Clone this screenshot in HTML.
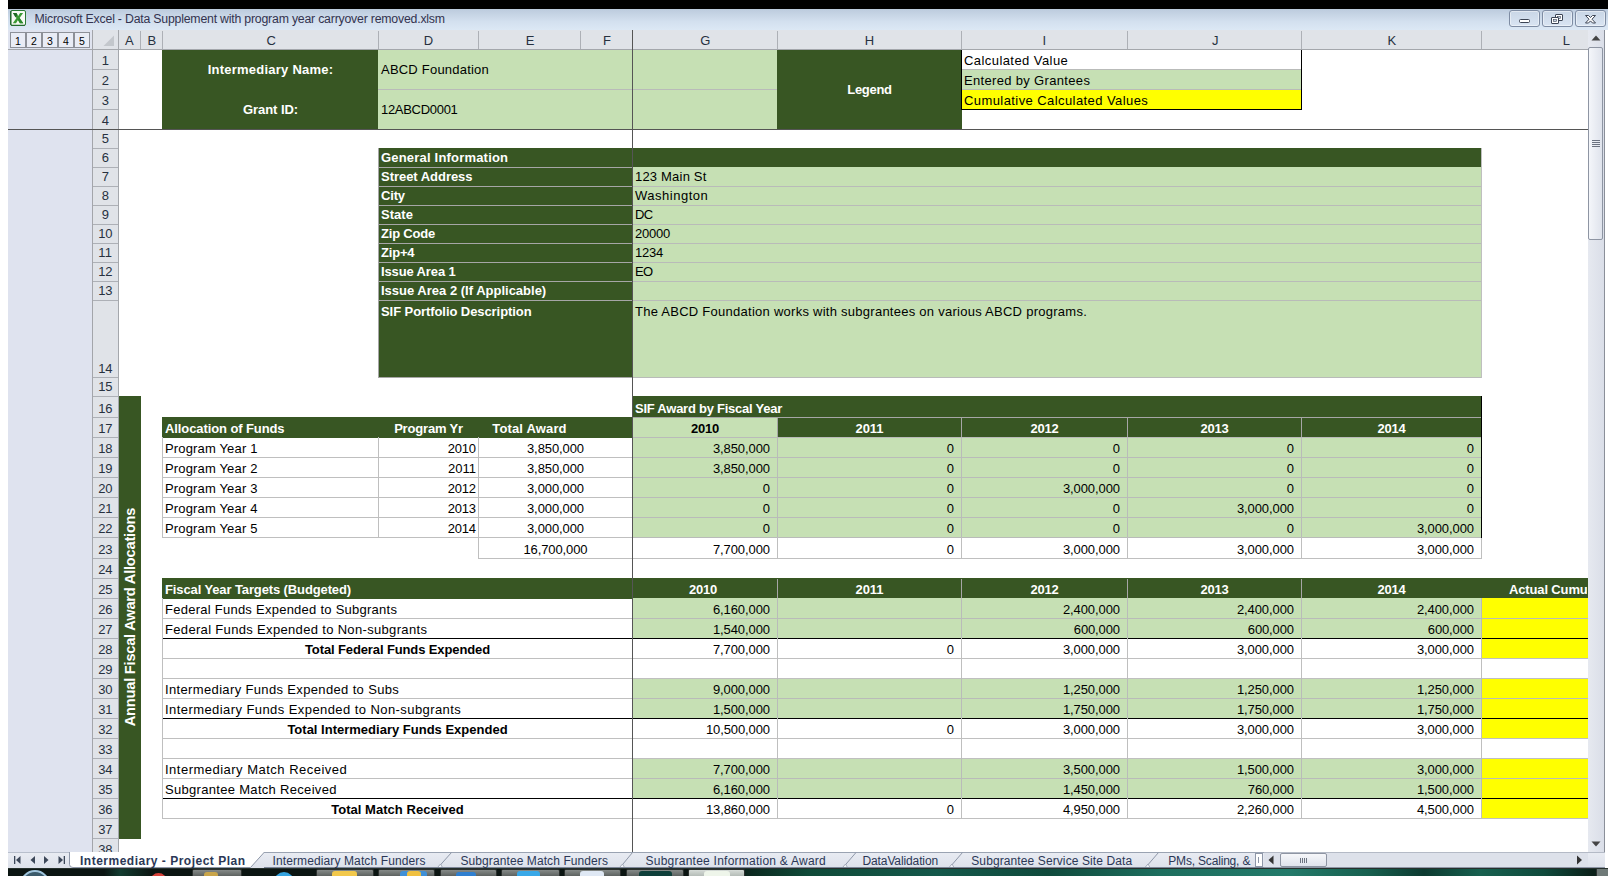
<!DOCTYPE html>
<html><head><meta charset="utf-8"><title>Microsoft Excel - Data Supplement</title>
<style>
html,body{margin:0;padding:0;}
body{width:1616px;height:876px;position:relative;overflow:hidden;background:#fff;font-family:"Liberation Sans",sans-serif;}
body>div,body>svg{position:absolute;}
.t{white-space:nowrap;overflow:visible;}
#blackbar{left:8px;top:0;width:1600px;height:9px;background:#000;}
#titlebar{left:8px;top:9px;width:1600px;height:21px;background:linear-gradient(#bccbdd,#d3e0ef 60%,#dce8f5);}
.wbtn{width:31px;height:17px;border:1px solid #7e8ca3;border-radius:3px;box-sizing:border-box;background:linear-gradient(#c9d6e6,#d9e4f2);box-shadow:inset 0 0 0 1px rgba(255,255,255,.45);}
.obtn{width:16px;height:16px;box-sizing:border-box;border:1px solid #8d9098;background:#e9ecf5;font-size:10.5px;line-height:16px;text-align:center;color:#000;text-indent:0;}
.vert span{position:absolute;left:50%;top:50%;transform:translate(-50%,-50%) rotate(-90deg);white-space:nowrap;color:#fff;font-weight:bold;}
.clip38{overflow:hidden!important;height:12px!important;}
#vscroll{left:1588px;top:30px;width:16px;height:838px;background:linear-gradient(90deg,#e6e9f0,#dadee8);border-right:1px solid #8a8f99;}
#vthumb{left:1588px;top:47px;width:15px;height:193px;box-sizing:border-box;border:1px solid #8e95a3;border-radius:2px;background:linear-gradient(90deg,#f4f6fa,#dfe3ec);}
#vthumb i{position:absolute;left:3px;width:8px;height:1px;background:#6c7380;}
#vthumb i:nth-child(1){top:92px}#vthumb i:nth-child(2){top:94px}#vthumb i:nth-child(3){top:96px}#vthumb i:nth-child(4){top:98px}
#tabbar{left:8px;top:852px;width:1597px;height:16px;background:linear-gradient(#e9ecf3,#dde1ea);}
#hscroll{left:1264px;top:852px;width:324px;height:16px;background:#dde1ea;}
#hthumb{left:1280px;top:853px;width:47px;height:14px;box-sizing:border-box;border:1px solid #8e95a3;border-radius:2px;background:linear-gradient(#f6f7fa,#dfe3ec);}
#hthumb i{position:absolute;top:4px;width:1px;height:5px;background:#6c7380;}
#hthumb i:nth-child(1){left:19px}#hthumb i:nth-child(2){left:21px}#hthumb i:nth-child(3){left:23px}#hthumb i:nth-child(4){left:25px}
#taskbar{left:8px;top:868px;width:1600px;height:8px;background:linear-gradient(90deg,#0b1512 0,#0b1512 6%,#123c30 7%,#0b1512 9%,#0b1512 45%,#0b2a20 46.5%,#0f4a38 50%,#14584a 58%,#0f4a3c 65%,#1d6e5e 72%,#237a6a 80%,#17604f 85%,#0c3a30 88.5%,#17604f 92%,#0f4a3c 96%,#0a2019 99%);border-top:1px solid #26302c;box-sizing:border-box;}
.tbtn.hi{background:linear-gradient(#d5dbd7,#b4bcb7);}
.tbtn{background:linear-gradient(#858a88,#5d6260);border:1px solid #2b302e;border-bottom:none;box-sizing:border-box;border-radius:2px 2px 0 0;}
</style></head><body>
<div id="blackbar"></div>
<div id="titlebar"></div>
<svg style="left:10px;top:10px" width="16" height="16" viewBox="0 0 16 16"><rect x="0.5" y="0.5" width="15" height="15" rx="1.5" fill="#f6faf4" stroke="#2a7a35"/><path d="M1 15V1" stroke="#1d5f2a" stroke-width="1"/><path d="M1 15.2H15" stroke="#1d5f2a" stroke-width="0.8"/><path d="M3 3h3.4l1.8 2.9L10.1 3h3L9.6 8l3.7 5.2H9.9L8 10.1l-2 3.1H2.8L6.5 8z" fill="#3a9a34"/><path d="M3 3h3.4l1 1.7-1.9 2.9z" fill="#1f6b25"/><path d="M8 10.1l1.9 3.1h3.4L9.6 8z" fill="#2b8a2c"/></svg>
<div class="t " style="left:34.4px;top:11px;width:600px;height:17px;line-height:17px;text-align:left;color:#33334f;font-size:12.3px;letter-spacing:-0.207px;padding-left:0px;box-sizing:border-box;">Microsoft Excel - Data Supplement with program year carryover removed.xlsm</div>
<div class="wbtn" style="left:1509px;top:10px"></div>
<div class="wbtn" style="left:1542px;top:10px"></div>
<div class="wbtn" style="left:1575px;top:10px"></div>
<svg style="left:1509px;top:10.5px" width="31" height="17" viewBox="0 0 31 17"><rect x="10.5" y="8.5" width="10" height="3" rx="1" fill="#fff" stroke="#3c4454"/></svg>
<svg style="left:1542px;top:10.5px" width="31" height="17" viewBox="0 0 31 17"><rect x="13.5" y="3.5" width="7" height="6" rx="0.5" fill="#fff" stroke="#3c4454"/><rect x="15.5" y="5.5" width="3" height="2" fill="#c9d6e6" stroke="#3c4454" stroke-width="0.6"/><rect x="9.5" y="6.5" width="7" height="6" rx="0.5" fill="#fff" stroke="#3c4454"/><rect x="11.5" y="8.5" width="3" height="2" fill="#c9d6e6" stroke="#3c4454" stroke-width="0.6"/></svg>
<svg style="left:1575px;top:10.5px" width="31" height="17" viewBox="0 0 31 17"><path d="M10.5 4.5h3l2 2 2-2h3l-3.5 3.7 3.5 3.8h-3l-2-2.1-2 2.1h-3l3.5-3.8z" fill="#fff" stroke="#3c4454" stroke-linejoin="round"/></svg>
<div style="left:8px;top:30px;width:85px;height:822px;background:#dfe3ef;"></div>
<div class="obtn" style="left:10px;top:32px">1</div>
<div class="obtn" style="left:26px;top:32px">2</div>
<div class="obtn" style="left:42px;top:32px">3</div>
<div class="obtn" style="left:58px;top:32px">4</div>
<div class="obtn" style="left:74px;top:32px">5</div>
<div style="left:8px;top:49px;width:85px;height:1px;background:#a3a5aa;"></div>
<div style="left:92px;top:30px;width:1px;height:822px;background:#a3a5aa;"></div>
<div style="left:93px;top:30px;width:1495px;height:20px;background:#e0e3e8;"></div>
<div style="left:93px;top:50px;width:26px;height:802px;background:#e0e3e8;"></div>
<svg style="left:103px;top:35px" width="12" height="12" viewBox="0 0 12 12"><path d="M11 0.5V11H0.5z" fill="#c3c7cc"/></svg>
<div style="left:140px;top:31px;width:1px;height:18px;background:#adb0b6;"></div>
<div class="t " style="left:119px;top:31px;width:21px;height:19px;line-height:19px;text-align:center;color:#27313f;font-size:13px;letter-spacing:0.094px;">A</div>
<div style="left:162px;top:31px;width:1px;height:18px;background:#adb0b6;"></div>
<div class="t " style="left:141px;top:31px;width:21px;height:19px;line-height:19px;text-align:center;color:#27313f;font-size:13px;letter-spacing:-0.431px;">B</div>
<div style="left:378px;top:31px;width:1px;height:18px;background:#adb0b6;"></div>
<div class="t " style="left:163px;top:31px;width:215px;height:19px;line-height:19px;text-align:center;color:#27313f;font-size:13px;letter-spacing:-1.309px;">C</div>
<div style="left:478px;top:31px;width:1px;height:18px;background:#adb0b6;"></div>
<div class="t " style="left:379px;top:31px;width:99px;height:19px;line-height:19px;text-align:center;color:#27313f;font-size:13px;letter-spacing:-0.066px;">D</div>
<div style="left:580px;top:31px;width:1px;height:18px;background:#adb0b6;"></div>
<div class="t " style="left:479px;top:31px;width:101px;height:19px;line-height:19px;text-align:center;color:#27313f;font-size:13px;letter-spacing:-1.274px;">E</div>
<div style="left:632px;top:31px;width:1px;height:18px;background:#adb0b6;"></div>
<div class="t " style="left:581px;top:31px;width:51px;height:19px;line-height:19px;text-align:center;color:#27313f;font-size:13px;letter-spacing:-0.978px;">F</div>
<div style="left:777px;top:31px;width:1px;height:18px;background:#adb0b6;"></div>
<div class="t " style="left:633px;top:31px;width:144px;height:19px;line-height:19px;text-align:center;color:#27313f;font-size:13px;letter-spacing:-0.553px;">G</div>
<div style="left:961px;top:31px;width:1px;height:18px;background:#adb0b6;"></div>
<div class="t " style="left:778px;top:31px;width:183px;height:19px;line-height:19px;text-align:center;color:#27313f;font-size:13px;letter-spacing:0.052px;">H</div>
<div style="left:1127px;top:31px;width:1px;height:18px;background:#adb0b6;"></div>
<div class="t " style="left:962px;top:31px;width:165px;height:19px;line-height:19px;text-align:center;color:#27313f;font-size:13px;letter-spacing:0.207px;">I</div>
<div style="left:1301px;top:31px;width:1px;height:18px;background:#adb0b6;"></div>
<div class="t " style="left:1128px;top:31px;width:173px;height:19px;line-height:19px;text-align:center;color:#27313f;font-size:13px;letter-spacing:-1.669px;">J</div>
<div style="left:1481px;top:31px;width:1px;height:18px;background:#adb0b6;"></div>
<div class="t " style="left:1302px;top:31px;width:179px;height:19px;line-height:19px;text-align:center;color:#27313f;font-size:13px;letter-spacing:-0.801px;">K</div>
<div class="t " style="left:1556px;top:31px;width:20px;height:19px;line-height:19px;text-align:center;color:#27313f;font-size:13px;letter-spacing:-0.859px;">L</div>
<div style="left:93px;top:69px;width:25px;height:1px;background:#adb0b6;"></div>
<div class="t " style="left:92.8px;top:51px;width:25px;height:19px;line-height:19px;text-align:center;color:#27313f;font-size:13px;letter-spacing:-0.229px;">1</div>
<div style="left:93px;top:89px;width:25px;height:1px;background:#adb0b6;"></div>
<div class="t " style="left:92.8px;top:71px;width:25px;height:19px;line-height:19px;text-align:center;color:#27313f;font-size:13px;letter-spacing:-0.229px;">2</div>
<div style="left:93px;top:109px;width:25px;height:1px;background:#adb0b6;"></div>
<div class="t " style="left:92.8px;top:91px;width:25px;height:19px;line-height:19px;text-align:center;color:#27313f;font-size:13px;letter-spacing:-0.229px;">3</div>
<div style="left:93px;top:129px;width:25px;height:1px;background:#adb0b6;"></div>
<div class="t " style="left:92.8px;top:111px;width:25px;height:19px;line-height:19px;text-align:center;color:#27313f;font-size:13px;letter-spacing:-0.229px;">4</div>
<div style="left:93px;top:148px;width:25px;height:1px;background:#adb0b6;"></div>
<div class="t " style="left:92.8px;top:129.4px;width:25px;height:19px;line-height:19px;text-align:center;color:#27313f;font-size:13px;letter-spacing:-0.229px;">5</div>
<div style="left:93px;top:167px;width:25px;height:1px;background:#adb0b6;"></div>
<div class="t " style="left:92.8px;top:148.4px;width:25px;height:19px;line-height:19px;text-align:center;color:#27313f;font-size:13px;letter-spacing:-0.229px;">6</div>
<div style="left:93px;top:186px;width:25px;height:1px;background:#adb0b6;"></div>
<div class="t " style="left:92.8px;top:167.4px;width:25px;height:19px;line-height:19px;text-align:center;color:#27313f;font-size:13px;letter-spacing:-0.229px;">7</div>
<div style="left:93px;top:205px;width:25px;height:1px;background:#adb0b6;"></div>
<div class="t " style="left:92.8px;top:186.4px;width:25px;height:19px;line-height:19px;text-align:center;color:#27313f;font-size:13px;letter-spacing:-0.229px;">8</div>
<div style="left:93px;top:224px;width:25px;height:1px;background:#adb0b6;"></div>
<div class="t " style="left:92.8px;top:205.4px;width:25px;height:19px;line-height:19px;text-align:center;color:#27313f;font-size:13px;letter-spacing:-0.229px;">9</div>
<div style="left:93px;top:243px;width:25px;height:1px;background:#adb0b6;"></div>
<div class="t " style="left:92.8px;top:224.4px;width:25px;height:19px;line-height:19px;text-align:center;color:#27313f;font-size:13px;letter-spacing:-0.229px;">10</div>
<div style="left:93px;top:262px;width:25px;height:1px;background:#adb0b6;"></div>
<div class="t " style="left:92.8px;top:243.4px;width:25px;height:19px;line-height:19px;text-align:center;color:#27313f;font-size:13px;letter-spacing:0.253px;">11</div>
<div style="left:93px;top:281px;width:25px;height:1px;background:#adb0b6;"></div>
<div class="t " style="left:92.8px;top:262.4px;width:25px;height:19px;line-height:19px;text-align:center;color:#27313f;font-size:13px;letter-spacing:-0.229px;">12</div>
<div style="left:93px;top:300px;width:25px;height:1px;background:#adb0b6;"></div>
<div class="t " style="left:92.8px;top:281.4px;width:25px;height:19px;line-height:19px;text-align:center;color:#27313f;font-size:13px;letter-spacing:-0.229px;">13</div>
<div style="left:93px;top:377px;width:25px;height:1px;background:#adb0b6;"></div>
<div class="t " style="left:92.8px;top:359px;width:25px;height:19px;line-height:19px;text-align:center;color:#27313f;font-size:13px;letter-spacing:-0.229px;">14</div>
<div style="left:93px;top:396px;width:25px;height:1px;background:#adb0b6;"></div>
<div class="t " style="left:92.8px;top:377.4px;width:25px;height:19px;line-height:19px;text-align:center;color:#27313f;font-size:13px;letter-spacing:-0.229px;">15</div>
<div style="left:93px;top:417px;width:25px;height:1px;background:#adb0b6;"></div>
<div class="t " style="left:92.8px;top:399px;width:25px;height:19px;line-height:19px;text-align:center;color:#27313f;font-size:13px;letter-spacing:-0.229px;">16</div>
<div style="left:93px;top:437px;width:25px;height:1px;background:#adb0b6;"></div>
<div class="t " style="left:92.8px;top:419px;width:25px;height:19px;line-height:19px;text-align:center;color:#27313f;font-size:13px;letter-spacing:-0.229px;">17</div>
<div style="left:93px;top:457px;width:25px;height:1px;background:#adb0b6;"></div>
<div class="t " style="left:92.8px;top:439px;width:25px;height:19px;line-height:19px;text-align:center;color:#27313f;font-size:13px;letter-spacing:-0.229px;">18</div>
<div style="left:93px;top:477px;width:25px;height:1px;background:#adb0b6;"></div>
<div class="t " style="left:92.8px;top:459px;width:25px;height:19px;line-height:19px;text-align:center;color:#27313f;font-size:13px;letter-spacing:-0.229px;">19</div>
<div style="left:93px;top:497px;width:25px;height:1px;background:#adb0b6;"></div>
<div class="t " style="left:92.8px;top:479px;width:25px;height:19px;line-height:19px;text-align:center;color:#27313f;font-size:13px;letter-spacing:-0.229px;">20</div>
<div style="left:93px;top:517px;width:25px;height:1px;background:#adb0b6;"></div>
<div class="t " style="left:92.8px;top:499px;width:25px;height:19px;line-height:19px;text-align:center;color:#27313f;font-size:13px;letter-spacing:-0.229px;">21</div>
<div style="left:93px;top:537px;width:25px;height:1px;background:#adb0b6;"></div>
<div class="t " style="left:92.8px;top:519px;width:25px;height:19px;line-height:19px;text-align:center;color:#27313f;font-size:13px;letter-spacing:-0.229px;">22</div>
<div style="left:93px;top:558px;width:25px;height:1px;background:#adb0b6;"></div>
<div class="t " style="left:92.8px;top:540px;width:25px;height:19px;line-height:19px;text-align:center;color:#27313f;font-size:13px;letter-spacing:-0.229px;">23</div>
<div style="left:93px;top:578px;width:25px;height:1px;background:#adb0b6;"></div>
<div class="t " style="left:92.8px;top:560px;width:25px;height:19px;line-height:19px;text-align:center;color:#27313f;font-size:13px;letter-spacing:-0.229px;">24</div>
<div style="left:93px;top:598px;width:25px;height:1px;background:#adb0b6;"></div>
<div class="t " style="left:92.8px;top:580px;width:25px;height:19px;line-height:19px;text-align:center;color:#27313f;font-size:13px;letter-spacing:-0.229px;">25</div>
<div style="left:93px;top:618px;width:25px;height:1px;background:#adb0b6;"></div>
<div class="t " style="left:92.8px;top:600px;width:25px;height:19px;line-height:19px;text-align:center;color:#27313f;font-size:13px;letter-spacing:-0.229px;">26</div>
<div style="left:93px;top:638px;width:25px;height:1px;background:#adb0b6;"></div>
<div class="t " style="left:92.8px;top:620px;width:25px;height:19px;line-height:19px;text-align:center;color:#27313f;font-size:13px;letter-spacing:-0.229px;">27</div>
<div style="left:93px;top:658px;width:25px;height:1px;background:#adb0b6;"></div>
<div class="t " style="left:92.8px;top:640px;width:25px;height:19px;line-height:19px;text-align:center;color:#27313f;font-size:13px;letter-spacing:-0.229px;">28</div>
<div style="left:93px;top:678px;width:25px;height:1px;background:#adb0b6;"></div>
<div class="t " style="left:92.8px;top:660px;width:25px;height:19px;line-height:19px;text-align:center;color:#27313f;font-size:13px;letter-spacing:-0.229px;">29</div>
<div style="left:93px;top:698px;width:25px;height:1px;background:#adb0b6;"></div>
<div class="t " style="left:92.8px;top:680px;width:25px;height:19px;line-height:19px;text-align:center;color:#27313f;font-size:13px;letter-spacing:-0.229px;">30</div>
<div style="left:93px;top:718px;width:25px;height:1px;background:#adb0b6;"></div>
<div class="t " style="left:92.8px;top:700px;width:25px;height:19px;line-height:19px;text-align:center;color:#27313f;font-size:13px;letter-spacing:-0.229px;">31</div>
<div style="left:93px;top:738px;width:25px;height:1px;background:#adb0b6;"></div>
<div class="t " style="left:92.8px;top:720px;width:25px;height:19px;line-height:19px;text-align:center;color:#27313f;font-size:13px;letter-spacing:-0.229px;">32</div>
<div style="left:93px;top:758px;width:25px;height:1px;background:#adb0b6;"></div>
<div class="t " style="left:92.8px;top:740px;width:25px;height:19px;line-height:19px;text-align:center;color:#27313f;font-size:13px;letter-spacing:-0.229px;">33</div>
<div style="left:93px;top:778px;width:25px;height:1px;background:#adb0b6;"></div>
<div class="t " style="left:92.8px;top:760px;width:25px;height:19px;line-height:19px;text-align:center;color:#27313f;font-size:13px;letter-spacing:-0.229px;">34</div>
<div style="left:93px;top:798px;width:25px;height:1px;background:#adb0b6;"></div>
<div class="t " style="left:92.8px;top:780px;width:25px;height:19px;line-height:19px;text-align:center;color:#27313f;font-size:13px;letter-spacing:-0.229px;">35</div>
<div style="left:93px;top:818px;width:25px;height:1px;background:#adb0b6;"></div>
<div class="t " style="left:92.8px;top:800px;width:25px;height:19px;line-height:19px;text-align:center;color:#27313f;font-size:13px;letter-spacing:-0.229px;">36</div>
<div style="left:93px;top:838px;width:25px;height:1px;background:#adb0b6;"></div>
<div class="t " style="left:92.8px;top:820px;width:25px;height:19px;line-height:19px;text-align:center;color:#27313f;font-size:13px;letter-spacing:-0.229px;">37</div>
<div class="t clip38" style="left:92.8px;top:840px;width:25px;height:19px;line-height:19px;text-align:center;color:#27313f;font-size:13px;letter-spacing:-0.229px;">38</div>
<div style="left:162px;top:49px;width:217px;height:81px;background:#385623;"></div>
<div style="left:378px;top:49px;width:400px;height:81px;background:#c6e0b4;"></div>
<div style="left:777px;top:49px;width:185px;height:81px;background:#385623;"></div>
<div style="left:961px;top:50px;width:340px;height:20px;background:#fff;"></div>
<div style="left:961px;top:70px;width:340px;height:20px;background:#c6e0b4;"></div>
<div style="left:961px;top:90px;width:340px;height:19px;background:#ffff00;"></div>
<div style="left:961px;top:69px;width:341px;height:1px;background:#b9bbb9;"></div>
<div style="left:961px;top:89px;width:341px;height:1px;background:#b9bbb9;"></div>
<div style="left:961px;top:109px;width:341px;height:1px;background:#000;"></div>
<div style="left:1301px;top:50px;width:1px;height:60px;background:#000;"></div>
<div style="left:961px;top:50px;width:1px;height:60px;background:#000;"></div>
<div style="left:378px;top:89px;width:399px;height:1px;background:#b9bbb9;"></div>
<div class="t " style="left:163px;top:60.0px;width:215px;height:19px;line-height:19px;text-align:center;color:#fff;font-size:13.0px;letter-spacing:0.240px;font-weight:bold;">Intermediary Name:</div>
<div class="t " style="left:163px;top:100.0px;width:215px;height:19px;line-height:19px;text-align:center;color:#fff;font-size:13.0px;letter-spacing:-0.046px;font-weight:bold;">Grant ID:</div>
<div class="t " style="left:379px;top:60.0px;width:253px;height:19px;line-height:19px;text-align:left;color:#000;font-size:13.0px;letter-spacing:0.215px;padding-left:2px;box-sizing:border-box;">ABCD Foundation</div>
<div class="t " style="left:379px;top:100.0px;width:253px;height:19px;line-height:19px;text-align:left;color:#000;font-size:13.0px;letter-spacing:-0.300px;padding-left:2px;box-sizing:border-box;">12ABCD0001</div>
<div class="t " style="left:778px;top:80.0px;width:183px;height:19px;line-height:19px;text-align:center;color:#fff;font-size:13.0px;letter-spacing:-0.288px;font-weight:bold;">Legend</div>
<div class="t " style="left:962px;top:51px;width:339px;height:19px;line-height:19px;text-align:left;color:#000;font-size:13.0px;letter-spacing:0.430px;padding-left:2px;box-sizing:border-box;">Calculated Value</div>
<div class="t " style="left:962px;top:71px;width:339px;height:19px;line-height:19px;text-align:left;color:#000;font-size:13.0px;letter-spacing:0.329px;padding-left:2px;box-sizing:border-box;">Entered by Grantees</div>
<div class="t " style="left:962px;top:91px;width:339px;height:19px;line-height:19px;text-align:left;color:#000;font-size:13.0px;letter-spacing:0.420px;padding-left:2px;box-sizing:border-box;">Cumulative Calculated Values</div>
<div style="left:378px;top:148px;width:1104px;height:20px;background:#385623;"></div>
<div style="left:378px;top:167px;width:255px;height:211px;background:#385623;"></div>
<div style="left:632px;top:167px;width:850px;height:211px;background:#c6e0b4;"></div>
<div style="left:378px;top:167px;width:255px;height:1px;background:#a6a6a6;"></div>
<div class="t " style="left:379px;top:148px;width:253px;height:19px;line-height:19px;text-align:left;color:#fff;font-size:13.0px;letter-spacing:0.194px;font-weight:bold;padding-left:2px;box-sizing:border-box;">General Information</div>
<div style="left:378px;top:186px;width:255px;height:1px;background:#a6a6a6;"></div>
<div style="left:633px;top:186px;width:849px;height:1px;background:#b9bbb9;"></div>
<div class="t " style="left:379px;top:167px;width:253px;height:19px;line-height:19px;text-align:left;color:#fff;font-size:13.0px;letter-spacing:-0.035px;font-weight:bold;padding-left:2px;box-sizing:border-box;">Street Address</div>
<div class="t " style="left:633px;top:167px;width:848px;height:19px;line-height:19px;text-align:left;color:#000;font-size:13.0px;letter-spacing:0.197px;padding-left:2px;box-sizing:border-box;">123 Main St</div>
<div style="left:378px;top:205px;width:255px;height:1px;background:#a6a6a6;"></div>
<div style="left:633px;top:205px;width:849px;height:1px;background:#b9bbb9;"></div>
<div class="t " style="left:379px;top:186px;width:253px;height:19px;line-height:19px;text-align:left;color:#fff;font-size:13.0px;letter-spacing:-0.157px;font-weight:bold;padding-left:2px;box-sizing:border-box;">City</div>
<div class="t " style="left:633px;top:186px;width:848px;height:19px;line-height:19px;text-align:left;color:#000;font-size:13.0px;letter-spacing:0.515px;padding-left:2px;box-sizing:border-box;">Washington</div>
<div style="left:378px;top:224px;width:255px;height:1px;background:#a6a6a6;"></div>
<div style="left:633px;top:224px;width:849px;height:1px;background:#b9bbb9;"></div>
<div class="t " style="left:379px;top:205px;width:253px;height:19px;line-height:19px;text-align:left;color:#fff;font-size:13.0px;letter-spacing:0.039px;font-weight:bold;padding-left:2px;box-sizing:border-box;">State</div>
<div class="t " style="left:633px;top:205px;width:848px;height:19px;line-height:19px;text-align:left;color:#000;font-size:13.0px;letter-spacing:-0.688px;padding-left:2px;box-sizing:border-box;">DC</div>
<div style="left:378px;top:243px;width:255px;height:1px;background:#a6a6a6;"></div>
<div style="left:633px;top:243px;width:849px;height:1px;background:#b9bbb9;"></div>
<div class="t " style="left:379px;top:224px;width:253px;height:19px;line-height:19px;text-align:left;color:#fff;font-size:13.0px;letter-spacing:-0.213px;font-weight:bold;padding-left:2px;box-sizing:border-box;">Zip Code</div>
<div class="t " style="left:633px;top:224px;width:848px;height:19px;line-height:19px;text-align:left;color:#000;font-size:13.0px;letter-spacing:-0.229px;padding-left:2px;box-sizing:border-box;">20000</div>
<div style="left:378px;top:262px;width:255px;height:1px;background:#a6a6a6;"></div>
<div style="left:633px;top:262px;width:849px;height:1px;background:#b9bbb9;"></div>
<div class="t " style="left:379px;top:243px;width:253px;height:19px;line-height:19px;text-align:left;color:#fff;font-size:13.0px;letter-spacing:-0.188px;font-weight:bold;padding-left:2px;box-sizing:border-box;">Zip+4</div>
<div class="t " style="left:633px;top:243px;width:848px;height:19px;line-height:19px;text-align:left;color:#000;font-size:13.0px;letter-spacing:-0.229px;padding-left:2px;box-sizing:border-box;">1234</div>
<div style="left:378px;top:281px;width:255px;height:1px;background:#a6a6a6;"></div>
<div style="left:633px;top:281px;width:849px;height:1px;background:#b9bbb9;"></div>
<div class="t " style="left:379px;top:262px;width:253px;height:19px;line-height:19px;text-align:left;color:#fff;font-size:13.0px;letter-spacing:-0.130px;font-weight:bold;padding-left:2px;box-sizing:border-box;">Issue Area 1</div>
<div class="t " style="left:633px;top:262px;width:848px;height:19px;line-height:19px;text-align:left;color:#000;font-size:13.0px;letter-spacing:-0.795px;padding-left:2px;box-sizing:border-box;">EO</div>
<div style="left:378px;top:300px;width:255px;height:1px;background:#a6a6a6;"></div>
<div style="left:633px;top:300px;width:849px;height:1px;background:#b9bbb9;"></div>
<div class="t " style="left:379px;top:281px;width:253px;height:19px;line-height:19px;text-align:left;color:#fff;font-size:13.0px;letter-spacing:0.000px;font-weight:bold;padding-left:2px;box-sizing:border-box;">Issue Area 2 (If Applicable)</div>
<div class="t " style="left:379px;top:302px;width:253px;height:19px;line-height:19px;text-align:left;color:#fff;font-size:13.0px;letter-spacing:-0.075px;font-weight:bold;padding-left:2px;box-sizing:border-box;">SIF Portfolio Description</div>
<div class="t " style="left:633px;top:302px;width:848px;height:19px;line-height:19px;text-align:left;color:#000;font-size:13.0px;letter-spacing:0.261px;padding-left:2px;box-sizing:border-box;">The ABCD Foundation works with subgrantees on various ABCD programs.</div>
<div style="left:633px;top:377px;width:849px;height:1px;background:#b9bbb9;"></div>
<div style="left:378px;top:148px;width:1px;height:230px;background:#a6a6a6;"></div>
<div style="left:378px;top:377px;width:255px;height:1px;background:#a6a6a6;"></div>
<div style="left:1481px;top:148px;width:1px;height:230px;background:#bfbfbf;"></div>
<div style="left:119px;top:396px;width:22px;height:443px;background:#385623;"></div>
<div class="t vert" style="left:119px;top:507.5px;width:22px;height:218.5px;"><span style="font-size:14.6px;letter-spacing:-0.209px;margin-left:-0.105px">Annual Fiscal Award Allocations</span></div>
<div style="left:632px;top:396px;width:850px;height:22px;background:#385623;"></div>
<div class="t " style="left:633px;top:399px;width:848px;height:19px;line-height:19px;text-align:left;color:#fff;font-size:13.0px;letter-spacing:-0.247px;font-weight:bold;padding-left:2px;box-sizing:border-box;">SIF Award by Fiscal Year</div>
<div style="left:162px;top:417px;width:471px;height:21px;background:#385623;"></div>
<div style="left:632px;top:417px;width:146px;height:21px;background:#c6e0b4;"></div>
<div style="left:777px;top:417px;width:705px;height:21px;background:#385623;"></div>
<div class="t " style="left:163px;top:419px;width:215px;height:19px;line-height:19px;text-align:left;color:#fff;font-size:13.0px;letter-spacing:-0.096px;font-weight:bold;padding-left:2px;box-sizing:border-box;">Allocation of Funds</div>
<div class="t " style="left:379px;top:419px;width:99px;height:19px;line-height:19px;text-align:center;color:#fff;font-size:13.0px;letter-spacing:-0.187px;font-weight:bold;">Program Yr</div>
<div class="t " style="left:479px;top:419px;width:101px;height:19px;line-height:19px;text-align:center;color:#fff;font-size:13.0px;letter-spacing:0.157px;font-weight:bold;">Total Award</div>
<div class="t " style="left:633px;top:419px;width:144px;height:19px;line-height:19px;text-align:center;color:#000;font-size:13.0px;letter-spacing:-0.229px;font-weight:bold;">2010</div>
<div class="t " style="left:778px;top:419px;width:183px;height:19px;line-height:19px;text-align:center;color:#fff;font-size:13.0px;letter-spacing:-0.050px;font-weight:bold;">2011</div>
<div style="left:777px;top:418px;width:1px;height:20px;background:#a6a6a6;"></div>
<div class="t " style="left:962px;top:419px;width:165px;height:19px;line-height:19px;text-align:center;color:#fff;font-size:13.0px;letter-spacing:-0.229px;font-weight:bold;">2012</div>
<div style="left:961px;top:418px;width:1px;height:20px;background:#a6a6a6;"></div>
<div class="t " style="left:1128px;top:419px;width:173px;height:19px;line-height:19px;text-align:center;color:#fff;font-size:13.0px;letter-spacing:-0.229px;font-weight:bold;">2013</div>
<div style="left:1127px;top:418px;width:1px;height:20px;background:#a6a6a6;"></div>
<div class="t " style="left:1302px;top:419px;width:179px;height:19px;line-height:19px;text-align:center;color:#fff;font-size:13.0px;letter-spacing:-0.229px;font-weight:bold;">2014</div>
<div style="left:1301px;top:418px;width:1px;height:20px;background:#a6a6a6;"></div>
<div style="left:632px;top:417px;width:850px;height:1px;background:#a6a6a6;"></div>
<div style="left:632px;top:437px;width:850px;height:101px;background:#c6e0b4;"></div>
<div class="t " style="left:163px;top:439px;width:215px;height:19px;line-height:19px;text-align:left;color:#000;font-size:13.0px;letter-spacing:0.158px;padding-left:2px;box-sizing:border-box;">Program Year 1</div>
<div class="t " style="left:379px;top:439px;width:99px;height:19px;line-height:19px;text-align:right;color:#000;font-size:13.0px;letter-spacing:-0.229px;padding-right:2px;box-sizing:border-box;margin-left:-0.229px;">2010</div>
<div class="t " style="left:479px;top:439px;width:153px;height:19px;line-height:19px;text-align:center;color:#000;font-size:13.0px;letter-spacing:-0.092px;">3,850,000</div>
<div class="t " style="left:633px;top:439px;width:144px;height:19px;line-height:19px;text-align:right;color:#000;font-size:13.0px;letter-spacing:-0.092px;padding-right:7px;box-sizing:border-box;margin-left:-0.092px;">3,850,000</div>
<div class="t " style="left:778px;top:439px;width:183px;height:19px;line-height:19px;text-align:right;color:#000;font-size:13.0px;letter-spacing:-0.229px;padding-right:7px;box-sizing:border-box;margin-left:-0.229px;">0</div>
<div class="t " style="left:962px;top:439px;width:165px;height:19px;line-height:19px;text-align:right;color:#000;font-size:13.0px;letter-spacing:-0.229px;padding-right:7px;box-sizing:border-box;margin-left:-0.229px;">0</div>
<div class="t " style="left:1128px;top:439px;width:173px;height:19px;line-height:19px;text-align:right;color:#000;font-size:13.0px;letter-spacing:-0.229px;padding-right:7px;box-sizing:border-box;margin-left:-0.229px;">0</div>
<div class="t " style="left:1302px;top:439px;width:179px;height:19px;line-height:19px;text-align:right;color:#000;font-size:13.0px;letter-spacing:-0.229px;padding-right:7px;box-sizing:border-box;margin-left:-0.229px;">0</div>
<div style="left:162px;top:457px;width:471px;height:1px;background:#bfbfbf;"></div>
<div style="left:633px;top:457px;width:849px;height:1px;background:#b9bbb9;"></div>
<div class="t " style="left:163px;top:459px;width:215px;height:19px;line-height:19px;text-align:left;color:#000;font-size:13.0px;letter-spacing:0.158px;padding-left:2px;box-sizing:border-box;">Program Year 2</div>
<div class="t " style="left:379px;top:459px;width:99px;height:19px;line-height:19px;text-align:right;color:#000;font-size:13.0px;letter-spacing:0.012px;padding-right:2px;box-sizing:border-box;margin-left:0.012px;">2011</div>
<div class="t " style="left:479px;top:459px;width:153px;height:19px;line-height:19px;text-align:center;color:#000;font-size:13.0px;letter-spacing:-0.092px;">3,850,000</div>
<div class="t " style="left:633px;top:459px;width:144px;height:19px;line-height:19px;text-align:right;color:#000;font-size:13.0px;letter-spacing:-0.092px;padding-right:7px;box-sizing:border-box;margin-left:-0.092px;">3,850,000</div>
<div class="t " style="left:778px;top:459px;width:183px;height:19px;line-height:19px;text-align:right;color:#000;font-size:13.0px;letter-spacing:-0.229px;padding-right:7px;box-sizing:border-box;margin-left:-0.229px;">0</div>
<div class="t " style="left:962px;top:459px;width:165px;height:19px;line-height:19px;text-align:right;color:#000;font-size:13.0px;letter-spacing:-0.229px;padding-right:7px;box-sizing:border-box;margin-left:-0.229px;">0</div>
<div class="t " style="left:1128px;top:459px;width:173px;height:19px;line-height:19px;text-align:right;color:#000;font-size:13.0px;letter-spacing:-0.229px;padding-right:7px;box-sizing:border-box;margin-left:-0.229px;">0</div>
<div class="t " style="left:1302px;top:459px;width:179px;height:19px;line-height:19px;text-align:right;color:#000;font-size:13.0px;letter-spacing:-0.229px;padding-right:7px;box-sizing:border-box;margin-left:-0.229px;">0</div>
<div style="left:162px;top:477px;width:471px;height:1px;background:#bfbfbf;"></div>
<div style="left:633px;top:477px;width:849px;height:1px;background:#b9bbb9;"></div>
<div class="t " style="left:163px;top:479px;width:215px;height:19px;line-height:19px;text-align:left;color:#000;font-size:13.0px;letter-spacing:0.158px;padding-left:2px;box-sizing:border-box;">Program Year 3</div>
<div class="t " style="left:379px;top:479px;width:99px;height:19px;line-height:19px;text-align:right;color:#000;font-size:13.0px;letter-spacing:-0.229px;padding-right:2px;box-sizing:border-box;margin-left:-0.229px;">2012</div>
<div class="t " style="left:479px;top:479px;width:153px;height:19px;line-height:19px;text-align:center;color:#000;font-size:13.0px;letter-spacing:-0.092px;">3,000,000</div>
<div class="t " style="left:633px;top:479px;width:144px;height:19px;line-height:19px;text-align:right;color:#000;font-size:13.0px;letter-spacing:-0.229px;padding-right:7px;box-sizing:border-box;margin-left:-0.229px;">0</div>
<div class="t " style="left:778px;top:479px;width:183px;height:19px;line-height:19px;text-align:right;color:#000;font-size:13.0px;letter-spacing:-0.229px;padding-right:7px;box-sizing:border-box;margin-left:-0.229px;">0</div>
<div class="t " style="left:962px;top:479px;width:165px;height:19px;line-height:19px;text-align:right;color:#000;font-size:13.0px;letter-spacing:-0.092px;padding-right:7px;box-sizing:border-box;margin-left:-0.092px;">3,000,000</div>
<div class="t " style="left:1128px;top:479px;width:173px;height:19px;line-height:19px;text-align:right;color:#000;font-size:13.0px;letter-spacing:-0.229px;padding-right:7px;box-sizing:border-box;margin-left:-0.229px;">0</div>
<div class="t " style="left:1302px;top:479px;width:179px;height:19px;line-height:19px;text-align:right;color:#000;font-size:13.0px;letter-spacing:-0.229px;padding-right:7px;box-sizing:border-box;margin-left:-0.229px;">0</div>
<div style="left:162px;top:497px;width:471px;height:1px;background:#bfbfbf;"></div>
<div style="left:633px;top:497px;width:849px;height:1px;background:#b9bbb9;"></div>
<div class="t " style="left:163px;top:499px;width:215px;height:19px;line-height:19px;text-align:left;color:#000;font-size:13.0px;letter-spacing:0.158px;padding-left:2px;box-sizing:border-box;">Program Year 4</div>
<div class="t " style="left:379px;top:499px;width:99px;height:19px;line-height:19px;text-align:right;color:#000;font-size:13.0px;letter-spacing:-0.229px;padding-right:2px;box-sizing:border-box;margin-left:-0.229px;">2013</div>
<div class="t " style="left:479px;top:499px;width:153px;height:19px;line-height:19px;text-align:center;color:#000;font-size:13.0px;letter-spacing:-0.092px;">3,000,000</div>
<div class="t " style="left:633px;top:499px;width:144px;height:19px;line-height:19px;text-align:right;color:#000;font-size:13.0px;letter-spacing:-0.229px;padding-right:7px;box-sizing:border-box;margin-left:-0.229px;">0</div>
<div class="t " style="left:778px;top:499px;width:183px;height:19px;line-height:19px;text-align:right;color:#000;font-size:13.0px;letter-spacing:-0.229px;padding-right:7px;box-sizing:border-box;margin-left:-0.229px;">0</div>
<div class="t " style="left:962px;top:499px;width:165px;height:19px;line-height:19px;text-align:right;color:#000;font-size:13.0px;letter-spacing:-0.229px;padding-right:7px;box-sizing:border-box;margin-left:-0.229px;">0</div>
<div class="t " style="left:1128px;top:499px;width:173px;height:19px;line-height:19px;text-align:right;color:#000;font-size:13.0px;letter-spacing:-0.092px;padding-right:7px;box-sizing:border-box;margin-left:-0.092px;">3,000,000</div>
<div class="t " style="left:1302px;top:499px;width:179px;height:19px;line-height:19px;text-align:right;color:#000;font-size:13.0px;letter-spacing:-0.229px;padding-right:7px;box-sizing:border-box;margin-left:-0.229px;">0</div>
<div style="left:162px;top:517px;width:471px;height:1px;background:#bfbfbf;"></div>
<div style="left:633px;top:517px;width:849px;height:1px;background:#b9bbb9;"></div>
<div class="t " style="left:163px;top:519px;width:215px;height:19px;line-height:19px;text-align:left;color:#000;font-size:13.0px;letter-spacing:0.158px;padding-left:2px;box-sizing:border-box;">Program Year 5</div>
<div class="t " style="left:379px;top:519px;width:99px;height:19px;line-height:19px;text-align:right;color:#000;font-size:13.0px;letter-spacing:-0.229px;padding-right:2px;box-sizing:border-box;margin-left:-0.229px;">2014</div>
<div class="t " style="left:479px;top:519px;width:153px;height:19px;line-height:19px;text-align:center;color:#000;font-size:13.0px;letter-spacing:-0.092px;">3,000,000</div>
<div class="t " style="left:633px;top:519px;width:144px;height:19px;line-height:19px;text-align:right;color:#000;font-size:13.0px;letter-spacing:-0.229px;padding-right:7px;box-sizing:border-box;margin-left:-0.229px;">0</div>
<div class="t " style="left:778px;top:519px;width:183px;height:19px;line-height:19px;text-align:right;color:#000;font-size:13.0px;letter-spacing:-0.229px;padding-right:7px;box-sizing:border-box;margin-left:-0.229px;">0</div>
<div class="t " style="left:962px;top:519px;width:165px;height:19px;line-height:19px;text-align:right;color:#000;font-size:13.0px;letter-spacing:-0.229px;padding-right:7px;box-sizing:border-box;margin-left:-0.229px;">0</div>
<div class="t " style="left:1128px;top:519px;width:173px;height:19px;line-height:19px;text-align:right;color:#000;font-size:13.0px;letter-spacing:-0.229px;padding-right:7px;box-sizing:border-box;margin-left:-0.229px;">0</div>
<div class="t " style="left:1302px;top:519px;width:179px;height:19px;line-height:19px;text-align:right;color:#000;font-size:13.0px;letter-spacing:-0.092px;padding-right:7px;box-sizing:border-box;margin-left:-0.092px;">3,000,000</div>
<div style="left:162px;top:537px;width:471px;height:1px;background:#bfbfbf;"></div>
<div style="left:633px;top:537px;width:849px;height:1px;background:#b9bbb9;"></div>
<div style="left:162px;top:437px;width:1px;height:101px;background:#bfbfbf;"></div>
<div style="left:378px;top:437px;width:1px;height:101px;background:#bfbfbf;"></div>
<div style="left:478px;top:437px;width:1px;height:101px;background:#bfbfbf;"></div>
<div style="left:777px;top:437px;width:1px;height:101px;background:#b9bbb9;"></div>
<div style="left:961px;top:437px;width:1px;height:101px;background:#b9bbb9;"></div>
<div style="left:1127px;top:437px;width:1px;height:101px;background:#b9bbb9;"></div>
<div style="left:1301px;top:437px;width:1px;height:101px;background:#b9bbb9;"></div>
<div style="left:632px;top:437px;width:850px;height:1px;background:#b9bbb9;"></div>
<div class="t " style="left:479px;top:540px;width:153px;height:19px;line-height:19px;text-align:center;color:#000;font-size:13.0px;letter-spacing:-0.106px;">16,700,000</div>
<div class="t " style="left:633px;top:540px;width:144px;height:19px;line-height:19px;text-align:right;color:#000;font-size:13.0px;letter-spacing:-0.092px;padding-right:7px;box-sizing:border-box;margin-left:-0.092px;">7,700,000</div>
<div class="t " style="left:778px;top:540px;width:183px;height:19px;line-height:19px;text-align:right;color:#000;font-size:13.0px;letter-spacing:-0.229px;padding-right:7px;box-sizing:border-box;margin-left:-0.229px;">0</div>
<div class="t " style="left:962px;top:540px;width:165px;height:19px;line-height:19px;text-align:right;color:#000;font-size:13.0px;letter-spacing:-0.092px;padding-right:7px;box-sizing:border-box;margin-left:-0.092px;">3,000,000</div>
<div class="t " style="left:1128px;top:540px;width:173px;height:19px;line-height:19px;text-align:right;color:#000;font-size:13.0px;letter-spacing:-0.092px;padding-right:7px;box-sizing:border-box;margin-left:-0.092px;">3,000,000</div>
<div class="t " style="left:1302px;top:540px;width:179px;height:19px;line-height:19px;text-align:right;color:#000;font-size:13.0px;letter-spacing:-0.092px;padding-right:7px;box-sizing:border-box;margin-left:-0.092px;">3,000,000</div>
<div style="left:478px;top:558px;width:1004px;height:1px;background:#bfbfbf;"></div>
<div style="left:478px;top:537px;width:1px;height:22px;background:#bfbfbf;"></div>
<div style="left:777px;top:537px;width:1px;height:22px;background:#bfbfbf;"></div>
<div style="left:961px;top:537px;width:1px;height:22px;background:#bfbfbf;"></div>
<div style="left:1127px;top:537px;width:1px;height:22px;background:#bfbfbf;"></div>
<div style="left:1301px;top:537px;width:1px;height:22px;background:#bfbfbf;"></div>
<div style="left:1481px;top:537px;width:1px;height:22px;background:#bfbfbf;"></div>
<div style="left:1481px;top:396px;width:1px;height:142px;background:#000;"></div>
<div style="left:162px;top:578px;width:1427px;height:21px;background:#385623;"></div>
<div class="t " style="left:163px;top:580px;width:469px;height:19px;line-height:19px;text-align:left;color:#fff;font-size:13.0px;letter-spacing:-0.117px;font-weight:bold;padding-left:2px;box-sizing:border-box;">Fiscal Year Targets (Budgeted)</div>
<div class="t " style="left:631px;top:580px;width:144px;height:19px;line-height:19px;text-align:center;color:#fff;font-size:13.0px;letter-spacing:-0.229px;font-weight:bold;">2010</div>
<div class="t " style="left:778px;top:580px;width:183px;height:19px;line-height:19px;text-align:center;color:#fff;font-size:13.0px;letter-spacing:-0.050px;font-weight:bold;">2011</div>
<div style="left:777px;top:579px;width:1px;height:20px;background:#a6a6a6;"></div>
<div class="t " style="left:962px;top:580px;width:165px;height:19px;line-height:19px;text-align:center;color:#fff;font-size:13.0px;letter-spacing:-0.229px;font-weight:bold;">2012</div>
<div style="left:961px;top:579px;width:1px;height:20px;background:#a6a6a6;"></div>
<div class="t " style="left:1128px;top:580px;width:173px;height:19px;line-height:19px;text-align:center;color:#fff;font-size:13.0px;letter-spacing:-0.229px;font-weight:bold;">2013</div>
<div style="left:1127px;top:579px;width:1px;height:20px;background:#a6a6a6;"></div>
<div class="t " style="left:1302px;top:580px;width:179px;height:19px;line-height:19px;text-align:center;color:#fff;font-size:13.0px;letter-spacing:-0.229px;font-weight:bold;">2014</div>
<div style="left:1301px;top:579px;width:1px;height:20px;background:#a6a6a6;"></div>
<div class="t" style="left:1482px;top:580px;width:105px;height:19px;line-height:19px;overflow:hidden;white-space:nowrap;color:#fff;font-weight:bold;font-size:13.0px;letter-spacing:-0.142px;padding-left:27px;box-sizing:border-box;">Actual Cumulative</div>
<div style="left:632px;top:598px;width:850px;height:21px;background:#c6e0b4;"></div>
<div style="left:1481px;top:598px;width:108px;height:21px;background:#ffff00;"></div>
<div class="t " style="left:163px;top:600px;width:469px;height:19px;line-height:19px;text-align:left;color:#000;font-size:13.0px;letter-spacing:0.254px;padding-left:2px;box-sizing:border-box;">Federal Funds Expended to Subgrants</div>
<div class="t " style="left:633px;top:600px;width:144px;height:19px;line-height:19px;text-align:right;color:#000;font-size:13.0px;letter-spacing:-0.092px;padding-right:7px;box-sizing:border-box;margin-left:-0.092px;">6,160,000</div>
<div class="t " style="left:962px;top:600px;width:165px;height:19px;line-height:19px;text-align:right;color:#000;font-size:13.0px;letter-spacing:-0.092px;padding-right:7px;box-sizing:border-box;margin-left:-0.092px;">2,400,000</div>
<div class="t " style="left:1128px;top:600px;width:173px;height:19px;line-height:19px;text-align:right;color:#000;font-size:13.0px;letter-spacing:-0.092px;padding-right:7px;box-sizing:border-box;margin-left:-0.092px;">2,400,000</div>
<div class="t " style="left:1302px;top:600px;width:179px;height:19px;line-height:19px;text-align:right;color:#000;font-size:13.0px;letter-spacing:-0.092px;padding-right:7px;box-sizing:border-box;margin-left:-0.092px;">2,400,000</div>
<div style="left:632px;top:618px;width:850px;height:21px;background:#c6e0b4;"></div>
<div style="left:1481px;top:618px;width:108px;height:21px;background:#ffff00;"></div>
<div class="t " style="left:163px;top:620px;width:469px;height:19px;line-height:19px;text-align:left;color:#000;font-size:13.0px;letter-spacing:0.331px;padding-left:2px;box-sizing:border-box;">Federal Funds Expended to Non-subgrants</div>
<div class="t " style="left:633px;top:620px;width:144px;height:19px;line-height:19px;text-align:right;color:#000;font-size:13.0px;letter-spacing:-0.092px;padding-right:7px;box-sizing:border-box;margin-left:-0.092px;">1,540,000</div>
<div class="t " style="left:962px;top:620px;width:165px;height:19px;line-height:19px;text-align:right;color:#000;font-size:13.0px;letter-spacing:-0.141px;padding-right:7px;box-sizing:border-box;margin-left:-0.141px;">600,000</div>
<div class="t " style="left:1128px;top:620px;width:173px;height:19px;line-height:19px;text-align:right;color:#000;font-size:13.0px;letter-spacing:-0.141px;padding-right:7px;box-sizing:border-box;margin-left:-0.141px;">600,000</div>
<div class="t " style="left:1302px;top:620px;width:179px;height:19px;line-height:19px;text-align:right;color:#000;font-size:13.0px;letter-spacing:-0.141px;padding-right:7px;box-sizing:border-box;margin-left:-0.141px;">600,000</div>
<div style="left:1481px;top:638px;width:108px;height:21px;background:#ffff00;"></div>
<div class="t " style="left:163px;top:640px;width:469px;height:19px;line-height:19px;text-align:center;color:#000;font-size:13.0px;letter-spacing:-0.119px;font-weight:bold;">Total Federal Funds Expended</div>
<div class="t " style="left:633px;top:640px;width:144px;height:19px;line-height:19px;text-align:right;color:#000;font-size:13.0px;letter-spacing:-0.092px;padding-right:7px;box-sizing:border-box;margin-left:-0.092px;">7,700,000</div>
<div class="t " style="left:778px;top:640px;width:183px;height:19px;line-height:19px;text-align:right;color:#000;font-size:13.0px;letter-spacing:-0.229px;padding-right:7px;box-sizing:border-box;margin-left:-0.229px;">0</div>
<div class="t " style="left:962px;top:640px;width:165px;height:19px;line-height:19px;text-align:right;color:#000;font-size:13.0px;letter-spacing:-0.092px;padding-right:7px;box-sizing:border-box;margin-left:-0.092px;">3,000,000</div>
<div class="t " style="left:1128px;top:640px;width:173px;height:19px;line-height:19px;text-align:right;color:#000;font-size:13.0px;letter-spacing:-0.092px;padding-right:7px;box-sizing:border-box;margin-left:-0.092px;">3,000,000</div>
<div class="t " style="left:1302px;top:640px;width:179px;height:19px;line-height:19px;text-align:right;color:#000;font-size:13.0px;letter-spacing:-0.092px;padding-right:7px;box-sizing:border-box;margin-left:-0.092px;">3,000,000</div>
<div style="left:632px;top:678px;width:850px;height:21px;background:#c6e0b4;"></div>
<div style="left:1481px;top:678px;width:108px;height:21px;background:#ffff00;"></div>
<div class="t " style="left:163px;top:680px;width:469px;height:19px;line-height:19px;text-align:left;color:#000;font-size:13.0px;letter-spacing:0.353px;padding-left:2px;box-sizing:border-box;">Intermediary Funds Expended to Subs</div>
<div class="t " style="left:633px;top:680px;width:144px;height:19px;line-height:19px;text-align:right;color:#000;font-size:13.0px;letter-spacing:-0.092px;padding-right:7px;box-sizing:border-box;margin-left:-0.092px;">9,000,000</div>
<div class="t " style="left:962px;top:680px;width:165px;height:19px;line-height:19px;text-align:right;color:#000;font-size:13.0px;letter-spacing:-0.092px;padding-right:7px;box-sizing:border-box;margin-left:-0.092px;">1,250,000</div>
<div class="t " style="left:1128px;top:680px;width:173px;height:19px;line-height:19px;text-align:right;color:#000;font-size:13.0px;letter-spacing:-0.092px;padding-right:7px;box-sizing:border-box;margin-left:-0.092px;">1,250,000</div>
<div class="t " style="left:1302px;top:680px;width:179px;height:19px;line-height:19px;text-align:right;color:#000;font-size:13.0px;letter-spacing:-0.092px;padding-right:7px;box-sizing:border-box;margin-left:-0.092px;">1,250,000</div>
<div style="left:632px;top:698px;width:850px;height:21px;background:#c6e0b4;"></div>
<div style="left:1481px;top:698px;width:108px;height:21px;background:#ffff00;"></div>
<div class="t " style="left:163px;top:700px;width:469px;height:19px;line-height:19px;text-align:left;color:#000;font-size:13.0px;letter-spacing:0.426px;padding-left:2px;box-sizing:border-box;">Intermediary Funds Expended to Non-subgrants</div>
<div class="t " style="left:633px;top:700px;width:144px;height:19px;line-height:19px;text-align:right;color:#000;font-size:13.0px;letter-spacing:-0.092px;padding-right:7px;box-sizing:border-box;margin-left:-0.092px;">1,500,000</div>
<div class="t " style="left:962px;top:700px;width:165px;height:19px;line-height:19px;text-align:right;color:#000;font-size:13.0px;letter-spacing:-0.092px;padding-right:7px;box-sizing:border-box;margin-left:-0.092px;">1,750,000</div>
<div class="t " style="left:1128px;top:700px;width:173px;height:19px;line-height:19px;text-align:right;color:#000;font-size:13.0px;letter-spacing:-0.092px;padding-right:7px;box-sizing:border-box;margin-left:-0.092px;">1,750,000</div>
<div class="t " style="left:1302px;top:700px;width:179px;height:19px;line-height:19px;text-align:right;color:#000;font-size:13.0px;letter-spacing:-0.092px;padding-right:7px;box-sizing:border-box;margin-left:-0.092px;">1,750,000</div>
<div style="left:1481px;top:718px;width:108px;height:21px;background:#ffff00;"></div>
<div class="t " style="left:163px;top:720px;width:469px;height:19px;line-height:19px;text-align:center;color:#000;font-size:13.0px;letter-spacing:0.005px;font-weight:bold;">Total Intermediary Funds Expended</div>
<div class="t " style="left:633px;top:720px;width:144px;height:19px;line-height:19px;text-align:right;color:#000;font-size:13.0px;letter-spacing:-0.106px;padding-right:7px;box-sizing:border-box;margin-left:-0.106px;">10,500,000</div>
<div class="t " style="left:778px;top:720px;width:183px;height:19px;line-height:19px;text-align:right;color:#000;font-size:13.0px;letter-spacing:-0.229px;padding-right:7px;box-sizing:border-box;margin-left:-0.229px;">0</div>
<div class="t " style="left:962px;top:720px;width:165px;height:19px;line-height:19px;text-align:right;color:#000;font-size:13.0px;letter-spacing:-0.092px;padding-right:7px;box-sizing:border-box;margin-left:-0.092px;">3,000,000</div>
<div class="t " style="left:1128px;top:720px;width:173px;height:19px;line-height:19px;text-align:right;color:#000;font-size:13.0px;letter-spacing:-0.092px;padding-right:7px;box-sizing:border-box;margin-left:-0.092px;">3,000,000</div>
<div class="t " style="left:1302px;top:720px;width:179px;height:19px;line-height:19px;text-align:right;color:#000;font-size:13.0px;letter-spacing:-0.092px;padding-right:7px;box-sizing:border-box;margin-left:-0.092px;">3,000,000</div>
<div style="left:632px;top:758px;width:850px;height:21px;background:#c6e0b4;"></div>
<div style="left:1481px;top:758px;width:108px;height:21px;background:#ffff00;"></div>
<div class="t " style="left:163px;top:760px;width:469px;height:19px;line-height:19px;text-align:left;color:#000;font-size:13.0px;letter-spacing:0.487px;padding-left:2px;box-sizing:border-box;">Intermediary Match Received</div>
<div class="t " style="left:633px;top:760px;width:144px;height:19px;line-height:19px;text-align:right;color:#000;font-size:13.0px;letter-spacing:-0.092px;padding-right:7px;box-sizing:border-box;margin-left:-0.092px;">7,700,000</div>
<div class="t " style="left:962px;top:760px;width:165px;height:19px;line-height:19px;text-align:right;color:#000;font-size:13.0px;letter-spacing:-0.092px;padding-right:7px;box-sizing:border-box;margin-left:-0.092px;">3,500,000</div>
<div class="t " style="left:1128px;top:760px;width:173px;height:19px;line-height:19px;text-align:right;color:#000;font-size:13.0px;letter-spacing:-0.092px;padding-right:7px;box-sizing:border-box;margin-left:-0.092px;">1,500,000</div>
<div class="t " style="left:1302px;top:760px;width:179px;height:19px;line-height:19px;text-align:right;color:#000;font-size:13.0px;letter-spacing:-0.092px;padding-right:7px;box-sizing:border-box;margin-left:-0.092px;">3,000,000</div>
<div style="left:632px;top:778px;width:850px;height:21px;background:#c6e0b4;"></div>
<div style="left:1481px;top:778px;width:108px;height:21px;background:#ffff00;"></div>
<div class="t " style="left:163px;top:780px;width:469px;height:19px;line-height:19px;text-align:left;color:#000;font-size:13.0px;letter-spacing:0.307px;padding-left:2px;box-sizing:border-box;">Subgrantee Match Received</div>
<div class="t " style="left:633px;top:780px;width:144px;height:19px;line-height:19px;text-align:right;color:#000;font-size:13.0px;letter-spacing:-0.092px;padding-right:7px;box-sizing:border-box;margin-left:-0.092px;">6,160,000</div>
<div class="t " style="left:962px;top:780px;width:165px;height:19px;line-height:19px;text-align:right;color:#000;font-size:13.0px;letter-spacing:-0.092px;padding-right:7px;box-sizing:border-box;margin-left:-0.092px;">1,450,000</div>
<div class="t " style="left:1128px;top:780px;width:173px;height:19px;line-height:19px;text-align:right;color:#000;font-size:13.0px;letter-spacing:-0.141px;padding-right:7px;box-sizing:border-box;margin-left:-0.141px;">760,000</div>
<div class="t " style="left:1302px;top:780px;width:179px;height:19px;line-height:19px;text-align:right;color:#000;font-size:13.0px;letter-spacing:-0.092px;padding-right:7px;box-sizing:border-box;margin-left:-0.092px;">1,500,000</div>
<div style="left:1481px;top:798px;width:108px;height:21px;background:#ffff00;"></div>
<div class="t " style="left:163px;top:800px;width:469px;height:19px;line-height:19px;text-align:center;color:#000;font-size:13.0px;letter-spacing:0.036px;font-weight:bold;">Total Match Received</div>
<div class="t " style="left:633px;top:800px;width:144px;height:19px;line-height:19px;text-align:right;color:#000;font-size:13.0px;letter-spacing:-0.106px;padding-right:7px;box-sizing:border-box;margin-left:-0.106px;">13,860,000</div>
<div class="t " style="left:778px;top:800px;width:183px;height:19px;line-height:19px;text-align:right;color:#000;font-size:13.0px;letter-spacing:-0.229px;padding-right:7px;box-sizing:border-box;margin-left:-0.229px;">0</div>
<div class="t " style="left:962px;top:800px;width:165px;height:19px;line-height:19px;text-align:right;color:#000;font-size:13.0px;letter-spacing:-0.092px;padding-right:7px;box-sizing:border-box;margin-left:-0.092px;">4,950,000</div>
<div class="t " style="left:1128px;top:800px;width:173px;height:19px;line-height:19px;text-align:right;color:#000;font-size:13.0px;letter-spacing:-0.092px;padding-right:7px;box-sizing:border-box;margin-left:-0.092px;">2,260,000</div>
<div class="t " style="left:1302px;top:800px;width:179px;height:19px;line-height:19px;text-align:right;color:#000;font-size:13.0px;letter-spacing:-0.092px;padding-right:7px;box-sizing:border-box;margin-left:-0.092px;">4,500,000</div>
<div style="left:777px;top:598px;width:1px;height:21px;background:#b9bbb9;"></div>
<div style="left:961px;top:598px;width:1px;height:21px;background:#b9bbb9;"></div>
<div style="left:1127px;top:598px;width:1px;height:21px;background:#b9bbb9;"></div>
<div style="left:1301px;top:598px;width:1px;height:21px;background:#b9bbb9;"></div>
<div style="left:1481px;top:598px;width:1px;height:21px;background:#b9bbb9;"></div>
<div style="left:162px;top:598px;width:1px;height:21px;background:#bfbfbf;"></div>
<div style="left:162px;top:618px;width:471px;height:1px;background:#bfbfbf;"></div>
<div style="left:632px;top:618px;width:956px;height:1px;background:#b9bbb9;"></div>
<div style="left:777px;top:618px;width:1px;height:21px;background:#b9bbb9;"></div>
<div style="left:961px;top:618px;width:1px;height:21px;background:#b9bbb9;"></div>
<div style="left:1127px;top:618px;width:1px;height:21px;background:#b9bbb9;"></div>
<div style="left:1301px;top:618px;width:1px;height:21px;background:#b9bbb9;"></div>
<div style="left:1481px;top:618px;width:1px;height:21px;background:#b9bbb9;"></div>
<div style="left:162px;top:618px;width:1px;height:21px;background:#bfbfbf;"></div>
<div style="left:162px;top:638px;width:1426px;height:1px;background:#000;"></div>
<div style="left:777px;top:638px;width:1px;height:21px;background:#bfbfbf;"></div>
<div style="left:961px;top:638px;width:1px;height:21px;background:#bfbfbf;"></div>
<div style="left:1127px;top:638px;width:1px;height:21px;background:#bfbfbf;"></div>
<div style="left:1301px;top:638px;width:1px;height:21px;background:#bfbfbf;"></div>
<div style="left:1481px;top:638px;width:1px;height:21px;background:#bfbfbf;"></div>
<div style="left:162px;top:638px;width:1px;height:21px;background:#bfbfbf;"></div>
<div style="left:162px;top:658px;width:471px;height:1px;background:#bfbfbf;"></div>
<div style="left:632px;top:658px;width:956px;height:1px;background:#bfbfbf;"></div>
<div style="left:777px;top:658px;width:1px;height:21px;background:#bfbfbf;"></div>
<div style="left:961px;top:658px;width:1px;height:21px;background:#bfbfbf;"></div>
<div style="left:1127px;top:658px;width:1px;height:21px;background:#bfbfbf;"></div>
<div style="left:1301px;top:658px;width:1px;height:21px;background:#bfbfbf;"></div>
<div style="left:1481px;top:658px;width:1px;height:21px;background:#bfbfbf;"></div>
<div style="left:162px;top:658px;width:1px;height:21px;background:#bfbfbf;"></div>
<div style="left:162px;top:678px;width:471px;height:1px;background:#bfbfbf;"></div>
<div style="left:632px;top:678px;width:956px;height:1px;background:#bfbfbf;"></div>
<div style="left:777px;top:678px;width:1px;height:21px;background:#b9bbb9;"></div>
<div style="left:961px;top:678px;width:1px;height:21px;background:#b9bbb9;"></div>
<div style="left:1127px;top:678px;width:1px;height:21px;background:#b9bbb9;"></div>
<div style="left:1301px;top:678px;width:1px;height:21px;background:#b9bbb9;"></div>
<div style="left:1481px;top:678px;width:1px;height:21px;background:#b9bbb9;"></div>
<div style="left:162px;top:678px;width:1px;height:21px;background:#bfbfbf;"></div>
<div style="left:162px;top:698px;width:471px;height:1px;background:#bfbfbf;"></div>
<div style="left:632px;top:698px;width:956px;height:1px;background:#b9bbb9;"></div>
<div style="left:777px;top:698px;width:1px;height:21px;background:#b9bbb9;"></div>
<div style="left:961px;top:698px;width:1px;height:21px;background:#b9bbb9;"></div>
<div style="left:1127px;top:698px;width:1px;height:21px;background:#b9bbb9;"></div>
<div style="left:1301px;top:698px;width:1px;height:21px;background:#b9bbb9;"></div>
<div style="left:1481px;top:698px;width:1px;height:21px;background:#b9bbb9;"></div>
<div style="left:162px;top:698px;width:1px;height:21px;background:#bfbfbf;"></div>
<div style="left:162px;top:718px;width:1426px;height:1px;background:#000;"></div>
<div style="left:777px;top:718px;width:1px;height:21px;background:#bfbfbf;"></div>
<div style="left:961px;top:718px;width:1px;height:21px;background:#bfbfbf;"></div>
<div style="left:1127px;top:718px;width:1px;height:21px;background:#bfbfbf;"></div>
<div style="left:1301px;top:718px;width:1px;height:21px;background:#bfbfbf;"></div>
<div style="left:1481px;top:718px;width:1px;height:21px;background:#bfbfbf;"></div>
<div style="left:162px;top:718px;width:1px;height:21px;background:#bfbfbf;"></div>
<div style="left:162px;top:738px;width:471px;height:1px;background:#bfbfbf;"></div>
<div style="left:632px;top:738px;width:956px;height:1px;background:#bfbfbf;"></div>
<div style="left:777px;top:738px;width:1px;height:21px;background:#bfbfbf;"></div>
<div style="left:961px;top:738px;width:1px;height:21px;background:#bfbfbf;"></div>
<div style="left:1127px;top:738px;width:1px;height:21px;background:#bfbfbf;"></div>
<div style="left:1301px;top:738px;width:1px;height:21px;background:#bfbfbf;"></div>
<div style="left:1481px;top:738px;width:1px;height:21px;background:#bfbfbf;"></div>
<div style="left:162px;top:738px;width:1px;height:21px;background:#bfbfbf;"></div>
<div style="left:162px;top:758px;width:471px;height:1px;background:#bfbfbf;"></div>
<div style="left:632px;top:758px;width:956px;height:1px;background:#bfbfbf;"></div>
<div style="left:777px;top:758px;width:1px;height:21px;background:#b9bbb9;"></div>
<div style="left:961px;top:758px;width:1px;height:21px;background:#b9bbb9;"></div>
<div style="left:1127px;top:758px;width:1px;height:21px;background:#b9bbb9;"></div>
<div style="left:1301px;top:758px;width:1px;height:21px;background:#b9bbb9;"></div>
<div style="left:1481px;top:758px;width:1px;height:21px;background:#b9bbb9;"></div>
<div style="left:162px;top:758px;width:1px;height:21px;background:#bfbfbf;"></div>
<div style="left:162px;top:778px;width:471px;height:1px;background:#bfbfbf;"></div>
<div style="left:632px;top:778px;width:956px;height:1px;background:#b9bbb9;"></div>
<div style="left:777px;top:778px;width:1px;height:21px;background:#b9bbb9;"></div>
<div style="left:961px;top:778px;width:1px;height:21px;background:#b9bbb9;"></div>
<div style="left:1127px;top:778px;width:1px;height:21px;background:#b9bbb9;"></div>
<div style="left:1301px;top:778px;width:1px;height:21px;background:#b9bbb9;"></div>
<div style="left:1481px;top:778px;width:1px;height:21px;background:#b9bbb9;"></div>
<div style="left:162px;top:778px;width:1px;height:21px;background:#bfbfbf;"></div>
<div style="left:162px;top:798px;width:1426px;height:1px;background:#000;"></div>
<div style="left:777px;top:798px;width:1px;height:21px;background:#bfbfbf;"></div>
<div style="left:961px;top:798px;width:1px;height:21px;background:#bfbfbf;"></div>
<div style="left:1127px;top:798px;width:1px;height:21px;background:#bfbfbf;"></div>
<div style="left:1301px;top:798px;width:1px;height:21px;background:#bfbfbf;"></div>
<div style="left:1481px;top:798px;width:1px;height:21px;background:#bfbfbf;"></div>
<div style="left:162px;top:798px;width:1px;height:21px;background:#bfbfbf;"></div>
<div style="left:162px;top:818px;width:471px;height:1px;background:#bfbfbf;"></div>
<div style="left:632px;top:818px;width:956px;height:1px;background:#bfbfbf;"></div>
<div style="left:93px;top:49px;width:1495px;height:1px;background:#a4a7ac;"></div>
<div style="left:118px;top:30px;width:1px;height:822px;background:#a4a7ac;"></div>
<div style="left:8px;top:129px;width:1580px;height:1px;background:#555;"></div>
<div style="left:632px;top:30px;width:1px;height:822px;background:#555;"></div>
<div id="vscroll"></div>
<svg style="left:1588px;top:30px" width="16" height="17" viewBox="0 0 16 17"><path d="M3.5 10.5h9L8 5.5z" fill="#444"/></svg>
<div id="vthumb"><i></i><i></i><i></i><i></i></div>
<svg style="left:1588px;top:835px" width="16" height="17" viewBox="0 0 16 17"><path d="M3.5 6.5h9L8 11.5z" fill="#444"/></svg>
<div id="tabbar"></div>
<svg style="left:8px;top:852px" width="64" height="16" viewBox="0 0 64 16"><g fill="#3b4658"><rect x="6" y="4" width="1.3" height="8"/><path d="M12.5 4v8L8 8z"/><path d="M27 4v8l-4.5-4z"/><path d="M36 4v8l4.5-4z"/><path d="M50.5 4v8L55 8z"/><rect x="55.7" y="4" width="1.3" height="8"/></g></svg>
<svg style="left:8px;top:852px" width="1260" height="16" viewBox="8 852 1260 16"><path d="M264 852.5H1268" stroke="#9aa3b2" stroke-width="1" fill="none"/><path d="M69.5 852V864.5Q69.5 867.5 73 867.5H250.5L264.5 852z" fill="#fff" stroke="none"/><path d="M69.5 852V864.5Q69.5 867.5 73 867.5H250.5L264.5 852" fill="none" stroke="#8e97a8" stroke-width="1"/><path d="M8 852.5H69" stroke="#b8bfcc" stroke-width="1" fill="none"/><path d="M438.5 867L451.5 852.5" stroke="#8e97a8" stroke-width="1" fill="none"/><path d="M437.5 867.5l3-3.5 2 3.5z" fill="#f4f6fa" stroke="#8e97a8" stroke-width="0.7"/><path d="M620.5 867L632.5 852.5" stroke="#8e97a8" stroke-width="1" fill="none"/><path d="M619.5 867.5l3-3.5 2 3.5z" fill="#f4f6fa" stroke="#8e97a8" stroke-width="0.7"/><path d="M843.5 867L856 852.5" stroke="#8e97a8" stroke-width="1" fill="none"/><path d="M842.5 867.5l3-3.5 2 3.5z" fill="#f4f6fa" stroke="#8e97a8" stroke-width="0.7"/><path d="M950 867L962.5 852.5" stroke="#8e97a8" stroke-width="1" fill="none"/><path d="M949 867.5l3-3.5 2 3.5z" fill="#f4f6fa" stroke="#8e97a8" stroke-width="0.7"/><path d="M1146 867L1158.5 852.5" stroke="#8e97a8" stroke-width="1" fill="none"/><path d="M1145 867.5l3-3.5 2 3.5z" fill="#f4f6fa" stroke="#8e97a8" stroke-width="0.7"/><path d="M264 867.5H1268" stroke="#7d8698" stroke-width="1" fill="none"/></svg>
<div class="t " style="left:80px;top:854px;width:175.5px;height:15px;line-height:15px;text-align:left;color:#2b3756;font-size:12px;letter-spacing:0.498px;font-weight:bold;padding-left:0px;box-sizing:border-box;">Intermediary - Project Plan</div>
<div class="t " style="left:272.5px;top:854px;width:163px;height:15px;line-height:15px;text-align:left;color:#2b3756;font-size:12px;letter-spacing:0.114px;padding-left:0px;box-sizing:border-box;">Intermediary Match Funders</div>
<div class="t " style="left:460.5px;top:854px;width:157.5px;height:15px;line-height:15px;text-align:left;color:#2b3756;font-size:12px;letter-spacing:0.087px;padding-left:0px;box-sizing:border-box;">Subgrantee Match Funders</div>
<div class="t " style="left:645.5px;top:854px;width:190.5px;height:15px;line-height:15px;text-align:left;color:#2b3756;font-size:12px;letter-spacing:0.243px;padding-left:0px;box-sizing:border-box;">Subgrantee Information &amp; Award</div>
<div class="t " style="left:862.5px;top:854px;width:85.5px;height:15px;line-height:15px;text-align:left;color:#2b3756;font-size:12px;letter-spacing:-0.118px;padding-left:0px;box-sizing:border-box;">DataValidation</div>
<div class="t " style="left:971.25px;top:854px;width:171px;height:15px;line-height:15px;text-align:left;color:#2b3756;font-size:12px;letter-spacing:0.104px;padding-left:0px;box-sizing:border-box;">Subgrantee Service Site Data</div>
<div class="t " style="left:1168.25px;top:854px;width:92px;height:15px;line-height:15px;text-align:left;color:#2b3756;font-size:12px;letter-spacing:-0.180px;padding-left:0px;box-sizing:border-box;">PMs, Scaling, &amp;</div>
<div style="left:1255px;top:853px;width:8px;height:14px;box-sizing:border-box;border:1px solid #8e97a8;background:#fff;"><div style="position:absolute;left:2px;top:3px;width:1px;height:6px;background:#8e97a8"></div></div>
<div id="hscroll"></div>
<div style="left:1264px;top:852px;width:341px;height:1px;background:#b4bac6;"></div>
<div style="left:1264px;top:867px;width:341px;height:1px;background:#8d95a5;"></div>
<svg style="left:1264px;top:852px" width="16" height="16" viewBox="0 0 16 16"><path d="M9.5 3.5v9L4.5 8z" fill="#333"/></svg>
<svg style="left:1572px;top:852px" width="16" height="16" viewBox="0 0 16 16"><path d="M5 3.5v9l5-4.5z" fill="#333"/></svg>
<div id="hthumb"><i></i><i></i><i></i><i></i></div>
<div id="taskbar"></div>
<div class="tbtn" style="left:192px;top:869px;width:50px;height:7px"></div>
<div class="tbtn" style="left:316px;top:869px;width:58px;height:7px"></div>
<div class="tbtn" style="left:378px;top:869px;width:57px;height:7px"></div>
<div class="tbtn" style="left:440px;top:869px;width:57px;height:7px"></div>
<div class="tbtn" style="left:501px;top:869px;width:59px;height:7px"></div>
<div class="tbtn" style="left:564px;top:869px;width:57px;height:7px"></div>
<div class="tbtn" style="left:626px;top:869px;width:58px;height:7px"></div>
<div class="tbtn hi" style="left:688px;top:869px;width:57px;height:7px"></div>
<div style="left:204px;top:872px;width:14px;height:4px;background:#c9a54a;border-radius:3px 3px 0 0;"></div>
<div style="left:332px;top:871px;width:25px;height:5px;background:#f2c84b;border-radius:3px 3px 0 0;"></div>
<div style="left:400px;top:871px;width:27px;height:5px;background:#3f8fd6;border-radius:3px 3px 0 0;"></div>
<div style="left:407px;top:871px;width:14px;height:5px;background:#f0c040;border-radius:3px 3px 0 0;"></div>
<div style="left:456px;top:872px;width:20px;height:4px;background:#2f7fd0;border-radius:3px 3px 0 0;"></div>
<div style="left:517px;top:871px;width:23px;height:5px;background:#38a8e8;border-radius:3px 3px 0 0;"></div>
<div style="left:580px;top:871px;width:24px;height:5px;background:#dfe8f4;border-radius:3px 3px 0 0;"></div>
<div style="left:639px;top:871px;width:33px;height:5px;background:#0e3f3a;border-radius:3px 3px 0 0;"></div>
<div style="left:704px;top:871px;width:26px;height:5px;background:#eef5ea;border-radius:3px 3px 0 0;"></div>
<div style="left:1596px;top:869px;width:12px;height:7px;background:#6f7a78;border-left:1px solid #2a302e;box-sizing:border-box;"></div>
<div style="left:20px;top:870px;width:30px;height:30px;border-radius:15px;border:2px solid #9fc4dc;box-sizing:border-box;background:#3a5a6a;"></div>
<div style="left:150px;top:873px;width:17px;height:17px;border-radius:9px;background:#d8423a;"></div>
<div style="left:274px;top:872px;width:20px;height:20px;border-radius:10px;background:#35a4e0;"></div>
</body></html>
